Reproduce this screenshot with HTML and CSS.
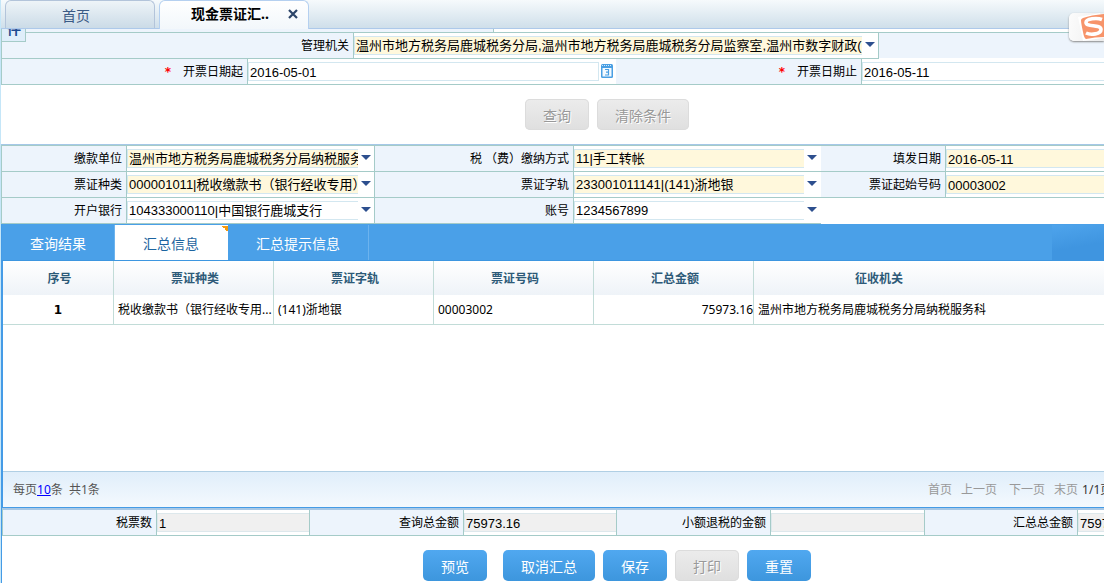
FILE: index.html
```html
<!DOCTYPE html>
<html lang="zh-CN">
<head>
<meta charset="utf-8">
<title>现金票证汇总</title>
<link rel="stylesheet" href="styles.css">
</head>
<body>
<header class="tabbar">
  <button class="wtab" type="button">首页</button>
  <div class="wtab wtab-active">
    <button class="wtab-name" type="button">现金票证汇..</button>
    <button class="wtab-close" type="button" aria-label="关闭">
      <svg width="10" height="10" viewBox="0 0 10 10"><path d="M1 1L9 9M9 1L1 9" stroke="#2b4468" stroke-width="2.2" fill="none"/></svg>
    </button>
  </div>
</header>
<div class="ime" aria-hidden="true">
  <svg width="35" height="28" viewBox="0 0 35 28">
    <path d="M9 4L31 0L40 24L14 28Z" fill="#fff"/>
    <path d="M14 5Q22 2 35 1V24Q26 24 17 26Q15 25 14 19Q12 10 12 7Q12 6 14 5Z" fill="#f7946a"/>
    <path d="M33 6.5C28 4.5 17 5.5 17 9.5C17 14.5 32 11 32 16.500C32 21 22 22.500 17 20" fill="none" stroke="#fff" stroke-width="3.6"/>
  </svg>
</div>

<main class="page">
  <div class="cutrow"><span class="legend">件</span></div>

  <form class="form">
    <div class="row row-org">
      <label class="lab" for="org">管理机关</label>
      <div class="val edge">
        <select id="org" class="field need"><option>温州市地方税务局鹿城税务分局,温州市地方税务局鹿城税务分局监察室,温州市数字财政(</option></select>
        <svg class="arrow" viewBox="0 0 10 5"><path d="M0 0H10L5 5Z"/></svg>
      </div>
      <div class="rest"></div>
    </div>
    <div class="row row-date">
      <label class="lab" for="d1"><span class="star">*</span>开票日期起</label>
      <div class="val">
        <input id="d1" class="field boxed" value="2016-05-01">
        <button class="cal" type="button" aria-label="选择日期">
          <svg width="12" height="14" viewBox="0 0 12 14"><rect width="12" height="14" rx="1.5" fill="#4a9fe3"/><path d="M1 1.500H11" stroke="#d5eafa" stroke-dasharray="1 1"/><rect x="1.500" y="4" width="9" height="8.500" fill="#f4faff"/><path d="M4 5.500H7.500V11H4M5 8.200H7.500" fill="none" stroke="#4a9fe3" stroke-width="1.200"/></svg>
        </button>
      </div>
      <label class="lab" for="d2"><span class="star">*</span>开票日期止</label>
      <div class="val"><input id="d2" class="field" value="2016-05-11"></div>
    </div>
  </form>

  <div class="actions actions-top">
    <button class="btn" type="button" disabled>查询</button>
    <button class="btn" type="button" disabled>清除条件</button>
  </div>

  <form class="form form-pay">
    <div class="row row-pay">
      <label class="lab" for="unit">缴款单位</label>
      <div class="val edge">
        <select id="unit" class="field need"><option>温州市地方税务局鹿城税务分局纳税服务科</option></select>
        <svg class="arrow" viewBox="0 0 10 5"><path d="M0 0H10L5 5Z"/></svg>
      </div>
      <label class="lab" for="way">税 （费）缴纳方式</label>
      <div class="val">
        <select id="way" class="field need"><option>11|手工转帐</option></select>
        <svg class="arrow" viewBox="0 0 10 5"><path d="M0 0H10L5 5Z"/></svg>
      </div>
      <label class="lab" for="filled">填发日期</label>
      <div class="val"><input id="filled" class="field need" value="2016-05-11"></div>
    </div>
    <div class="row row-pay">
      <label class="lab" for="kind">票证种类</label>
      <div class="val edge">
        <select id="kind" class="field need"><option>000001011|税收缴款书（银行经收专用）</option></select>
        <svg class="arrow" viewBox="0 0 10 5"><path d="M0 0H10L5 5Z"/></svg>
      </div>
      <label class="lab" for="track">票证字轨</label>
      <div class="val">
        <select id="track" class="field need"><option>233001011141|(141)浙地银</option></select>
        <svg class="arrow" viewBox="0 0 10 5"><path d="M0 0H10L5 5Z"/></svg>
      </div>
      <label class="lab" for="start">票证起始号码</label>
      <div class="val"><input id="start" class="field need" value="00003002"></div>
    </div>
    <div class="row row-pay">
      <label class="lab" for="bank">开户银行</label>
      <div class="val edge">
        <select id="bank" class="field"><option>104333000110|中国银行鹿城支行</option></select>
        <svg class="arrow" viewBox="0 0 10 5"><path d="M0 0H10L5 5Z"/></svg>
      </div>
      <label class="lab" for="acct">账号</label>
      <div class="val">
        <select id="acct" class="field"><option>1234567899</option></select>
        <svg class="arrow" viewBox="0 0 10 5"><path d="M0 0H10L5 5Z"/></svg>
      </div>
    </div>
  </form>

  <section class="panel">
    <nav class="tabs">
      <button class="tab" type="button">查询结果</button>
      <button class="tab tab-on" type="button">汇总信息</button>
      <button class="tab" type="button">汇总提示信息</button>
      <span class="tabs-end"></span>
    </nav>
    <div class="grid">
      <div class="grid-body">
        <table class="list">
          <colgroup><col class="c-no"><col class="c-mid"><col class="c-mid"><col class="c-mid"><col class="c-mid"><col class="c-org"><col></colgroup>
          <thead><tr><th>序号</th><th>票证种类</th><th>票证字轨</th><th>票证号码</th><th>汇总金额</th><th>征收机关</th><th></th></tr></thead>
          <tbody><tr><td class="no">1</td><td>税收缴款书（银行经收专用...</td><td>(141)浙地银</td><td>00003002</td><td class="num">75973.16</td><td>温州市地方税务局鹿城税务分局纳税服务科</td><td></td></tr></tbody>
        </table>
      </div>
      <div class="pager">
        <span>每页<a class="size" href="#">10</a>条&nbsp; 共1条</span>
        <nav class="pages">
          <a href="#">首页</a><a href="#">上一页</a><a href="#">下一页</a><a href="#">末页</a><span class="count">1/1页</span>
        </nav>
      </div>
    </div>

    <form class="form form-sum">
      <div class="row row-sum">
        <label class="lab" for="s1">税票数</label>
        <div class="val edge"><input id="s1" class="field off" value="1" readonly></div>
        <label class="lab" for="s2">查询总金额</label>
        <div class="val edge"><input id="s2" class="field off" value="75973.16" readonly></div>
        <label class="lab" for="s3">小额退税的金额</label>
        <div class="val edge"><input id="s3" class="field off" value="" readonly></div>
        <label class="lab" for="s4">汇总总金额</label>
        <div class="val"><input id="s4" class="field off" value="75973.16" readonly></div>
      </div>
    </form>

    <div class="actions actions-bottom">
      <button class="btn btn-blue btn-first" type="button">预览</button>
      <button class="btn btn-blue" type="button">取消汇总</button>
      <button class="btn btn-blue" type="button">保存</button>
      <button class="btn" type="button" disabled>打印</button>
      <button class="btn btn-blue" type="button">重置</button>
    </div>
  </section>
</main>
</body>
</html>
```
FILE: styles.css
```css
* { box-sizing: border-box; }

body {
  margin: 0;
  min-height: 100vh;
  display: flex;
  flex-direction: column;
  overflow: hidden;
  background: #fff;
  border-left: 1px solid #c5e6f8;
  color: #000;
  font: 12px/16px "Noto Sans", "Noto Sans CJK SC", sans-serif;
}

button, input, select { font: inherit; color: inherit; margin: 0; padding: 0; border: 0; border-radius: 0; background: none; }
form { margin: 0; }

/* window tabs */
.tabbar {
  display: flex;
  gap: 4px;
  height: 29px;
  padding-left: 4px;
  border-bottom: 1px solid #adc9ea;
  background: linear-gradient(#f6fafc, #cfdfea);
}
.wtab {
  width: 150px;
  height: 28px;
  padding: 3px 8px 0 0;
  border: 1px solid #b3c4da;
  border-bottom: 0;
  border-radius: 6px 6px 0 0;
  background: linear-gradient(#eef4f8, #cbdbe7);
  color: #3a5a85;
  font-size: 14px;
  line-height: 20px;
}
.wtab-active {
  display: flex;
  height: 29px;
  padding: 3px 9px 0 31px;
  border-color: #b5d0f0;
  background: linear-gradient(#fff, #f2f7fb);
  color: #000;
  justify-content: space-between;
  align-items: flex-start;
}
.wtab-name { font-weight: bold; white-space: nowrap; }
.wtab-close { display: flex; padding: 5px 1px; }

/* floating input method badge */
.ime {
  position: absolute;
  top: 13px;
  right: 0;
  z-index: 2;
  width: 35px;
  height: 28px;
  overflow: hidden;
  border-radius: 5px 0 0 5px;
  background: linear-gradient(100deg, #fcfcfc, #ececec);
  box-shadow: 0 1px 2px #888;
}
.ime svg { display: block; }

.page { flex: 1; display: flex; flex-direction: column; }

.cutrow {
  position: relative;
  height: 4px;
  border-left: 1px solid #a5cbc8;
  border-bottom: 1px solid #a5cbc8;
  background: linear-gradient(90deg, #edf4fc 491px, #a5cbc8 491px 492px, #fff 492px);
}
.legend {
  position: absolute;
  top: 0;
  left: 0;
  z-index: 1;
  width: 24px;
  height: 13px;
  padding: 0 4px 0 5px;
  display: flex;
  align-items: flex-end;
  overflow: hidden;
  border-right: 1px solid #a5cbc8;
  border-bottom: 1px solid #a5cbc8;
  background: #dfeefa;
  color: #1d4a90;
  font-size: 14px;
  line-height: 24px;
  font-weight: bold;
}

/* label / value rows */
.form { border-left: 1px solid #a5cbc8; }
.row { display: grid; }
.row-org { grid-template-columns: 352fr 525fr 225fr; }
.row-date { grid-template-columns: 246fr 368fr 246fr 242fr; }
.row-pay { grid-template-columns: 125fr 248fr 199fr 247fr 125fr 158fr; }
.row-sum { grid-template-columns: 154fr 153fr 154fr 153fr 154fr 154fr 153fr 26fr; }
.lab, .val, .rest { min-width: 0; height: 26px; border-bottom: 1px solid #a5cbc8; }
.lab {
  padding: 5px 4px 0 0;
  border-right: 1px solid #a5cbc8;
  background: #edf4fc;
  text-align: right;
  white-space: nowrap;
}
.rest { background: #edf4fc; border-bottom-color: #fff; }
.star { margin-right: 12px; color: #f00; font-family: "DejaVu Sans", sans-serif; font-weight: bold; }
.val { display: flex; align-items: flex-start; padding-top: 3px; }
.edge { border-right: 1px solid #a5cbc8; }
.field {
  appearance: none;
  flex: 1;
  min-width: 0;
  width: 100%;
  height: 19px;
  padding: 0 0 0 1px;
  border: 1px solid #d3e7f0;
  border-right: 0;
  outline: 0;
  font: 13px/17px "Liberation Sans", "Noto Sans CJK SC", sans-serif;
  overflow: hidden;
  white-space: nowrap;
}
input.field { padding-top: 2px; }
.boxed { border-right: 1px solid #d3e7f0; }
.need { background: #fff8dc; }
.off { background: #f0f0f0; border-color: #dde8ec; }
.arrow { flex: none; width: 10px; height: 5px; margin: 6px 4px 0 3px; fill: #2d4f8e; }
.edge .arrow { margin-right: 3px; margin-left: 3px; }
.cal { display: flex; padding: 2px 3px 0 2px; }

/* buttons */
.actions { display: flex; justify-content: center; gap: 8px; }
.actions-top { padding: 14px 0 14px 109px; border-bottom: 1px solid #a5c8e8; }
.actions-bottom { padding: 14px 0 2px 128px; }
.btn {
  height: 31px;
  padding: 2px 18px 0;
  border-radius: 5px;
  background: linear-gradient(#ececec, #dfdfdf);
  box-shadow: inset 0 0 0 1px #dcdcdc;
  color: #999;
  font-size: 14px;
  text-shadow: 1px 1px 0 #fff;
}
.btn-blue { background: linear-gradient(#50a8f0, #3d96dd); box-shadow: none; color: #fff; text-shadow: none; }
.btn-first { margin-right: 8px; }

.form-pay { border-top: 1px solid #a5cbc8; }

/* tabs over the list */
.panel { flex: 1; display: flex; flex-direction: column; border-left: 1px solid #459be6; }
.tabs { display: flex; height: 37px; padding: 1px 0 0; background: #4aa0e8; border-bottom: 1px solid #3d96e0; }
.tab { padding: 3px 28px 0; color: #fff; font-size: 14px; border-right: 1px solid #6cb3ee; white-space: nowrap; }
.tab-on {
  padding-right: 29px;
  border-right: 0;
  background: linear-gradient(45deg, transparent 50%, #f79a0c 50%) right 0 top 1px / 6px 6px no-repeat, #fff;
  color: #1c64a0;
}
.tabs-end { width: 52px; margin: 0 0 0 auto; background: linear-gradient(170deg, #4ea4ec, #3f95e0 60%); }

.grid { flex: 1; display: flex; flex-direction: column; border-left: 1px solid #459be6; border-bottom: 1px solid #459be6; }
.grid-body { flex: 1; overflow: hidden; }
.list { width: 100%; table-layout: fixed; border-collapse: separate; border-spacing: 0; }
.c-no { width: 111px; }
.c-mid { width: 160px; }
.c-org { width: 250px; }
.list th {
  height: 34px;
  padding: 2px 0 0 3px;
  border-right: 1px solid #c2dcd8;
  background: linear-gradient(#fff, #eef3f8);
  color: #2d5a78;
}
.list td { height: 30px; padding: 0 0 0 4px; border-right: 1px solid #c2dcd8; border-bottom: 1px solid #c2dcd8; white-space: nowrap; }
.list th:nth-child(n+6), .list td:nth-child(n+6) { border-right: 0; }
.list th:nth-child(n+6) { padding-left: 0; }
.list .no { text-align: center; font-family: "DejaVu Sans", sans-serif; font-weight: bold; padding: 0; }
.list .num { text-align: right; padding: 0; }

.pager {
  display: flex;
  justify-content: space-between;
  align-items: center;
  height: 36px;
  padding-left: 10px;
  border-top: 1px solid #b0cfe4;
  background: linear-gradient(#e0eefa, #f4f9fe);
  color: #555;
}
.size { color: #00f; }
.pages { display: flex; width: 176px; white-space: nowrap; }
.pages a { color: #999; text-decoration: none; margin-right: 9px; }
.pages a:nth-child(2) { margin-right: 12px; }
.pages a:nth-child(4) { margin-right: 4px; }
.count { color: #333; }

.form-sum { border-top: 2px solid #a8c8e6; }
```
